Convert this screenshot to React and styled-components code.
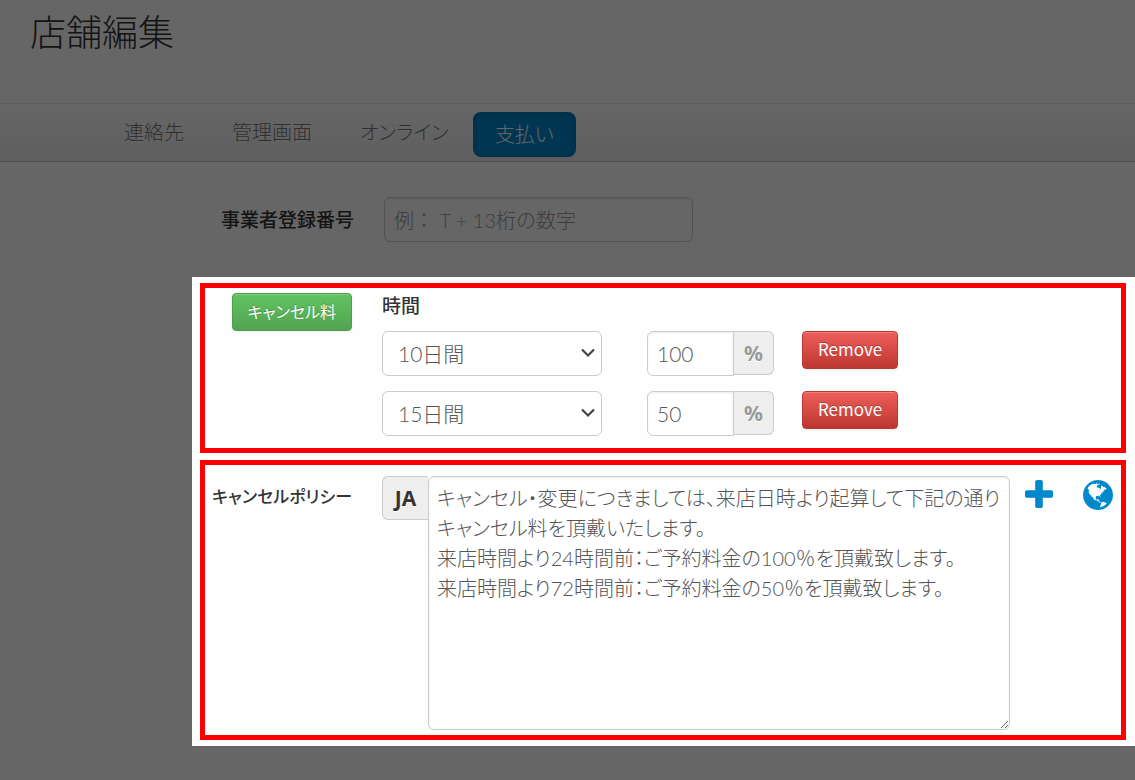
import React from 'react'
import styled, { createGlobalStyle, css } from 'styled-components'

const theme = {
  text: '#333',
  input: '#555',
  border: '#ccc',
  primary: '#0088cc',
  frame: '#ff0000',
}

const tabs = [
  { id: 'contact', name: '連絡先' },
  { id: 'admin', name: '管理画面' },
  { id: 'online', name: 'オンライン' },
  { id: 'payment', name: '支払い' },
]

const periods = ['10日間', '15日間']

const fees = [
  { id: 'fee-1', period: '10日間', percent: '100' },
  { id: 'fee-2', period: '15日間', percent: '50' },
]

const policy = `キャンセル・変更につきましては、来店日時より起算して下記の通りキャンセル料を頂戴いたします。
来店時間より24時間前：ご予約料金の100％を頂戴致します。
来店時間より72時間前：ご予約料金の50％を頂戴致します。`

const GlobalStyle = createGlobalStyle`
  * {
    box-sizing: border-box;
  }
  body {
    margin: 0;
    background: #fff;
    color: ${theme.text};
    font-family: "Noto Sans CJK JP", sans-serif;
    font-size: 21px;
    font-weight: 300;
    line-height: 30px;
    font-feature-settings: "palt";
  }
  button, input, select, textarea {
    margin: 0;
    font: inherit;
    font-feature-settings: inherit;
  }
`

const Page = styled.div`
  min-height: 100vh;
  overflow: hidden;
`
const Header = styled.header`
  height: 103px;
  padding: 0 30px;
`
const Title = styled.h1`
  margin: 0;
  font-size: 36px;
  font-weight: 300;
  line-height: 60px;
`
const Nav = styled.nav`
  display: flex;
  align-items: flex-start;
  height: 59px;
  padding: 8px 0 0 100px;
  border-top: 1px solid #e5e5e5;
  border-bottom: 1px solid #c4c4c4;
  background: linear-gradient(#fff, #ededed);
`
const Tab = styled.a`
  padding: 5px 24px 10px;
  border-radius: 8px;
  color: #777;
  font-size: 20px;
  text-decoration: none;
  text-shadow: 0 1px 0 #fff;

  ${({ $active }) => $active && css`
    padding: 7px 22px 8px;
    background: ${theme.primary};
    box-shadow: inset 0 3px 12px rgba(0, 0, 0, .15);
    color: #fff;
    text-shadow: none;
  `}
`
const Row = styled.div`
  display: flex;
  align-items: flex-start;
  gap: 30px;
`
const NumberRow = styled(Row)`
  padding: 35px 0;
`
const Side = styled.div`
  flex: none;
  width: ${({ $wide }) => ($wide ? 354 : 147)}px;
  padding-top: ${({ $top }) => $top || 0}px;
  text-align: right;
`
const Label = styled.label`
  font-size: ${({ $small }) => ($small ? 17 : 19)}px;
  font-weight: 500;
  white-space: nowrap;
`
const field = css`
  height: 45px;
  border: 1px solid ${theme.border};
  border-radius: 6px;
  background: #fff;
  box-shadow: inset 0 1px 2px rgba(0, 0, 0, .08);
  color: ${theme.input};
  font-family: Lato, "Noto Sans CJK JP", sans-serif;
  outline: none;
`
const TextInput = styled.input`
  ${field}
  width: 309px;
  padding: 0 9px;
  font-size: 20px;
  font-feature-settings: normal;

  &::placeholder {
    color: #999;
    opacity: 1;
  }
`
const PercentInput = styled.input`
  ${field}
  width: 87px;
  padding: 0 9px;
  border-radius: 6px 0 0 6px;
`
const Addon = styled.span`
  flex: none;
  height: 44px;
  padding: 6px 10px;
  border: 1px solid ${theme.border};
  background: #eee;
  color: ${({ $dark }) => ($dark ? theme.text : '#999')};
  font-family: "Noto Sans", sans-serif;
  font-weight: 700;
  text-align: center;
  text-shadow: 0 1px 0 #fff;
`
const PercentAddon = styled(Addon)`
  width: 40px;
  border-left: 0;
  border-radius: 0 6px 6px 0;
`
const LangAddon = styled(Addon)`
  width: 46px;
  border-right: 0;
  border-radius: 6px 0 0 6px;
`
const Spotlight = styled.main`
  position: relative;
  display: flex;
  flex-direction: column;
  gap: 7px;
  margin-left: 192px;
  padding: 6px 9px 6px 8px;
  background: #fff;
  box-shadow: 0 0 0 9999px rgba(0, 0, 0, .6);
`
const Frame = styled.section`
  padding: ${({ $padding }) => $padding};
  border: 5px solid ${theme.frame};
  background: #fefefe;
`
const Button = styled.button`
  height: 38px;
  padding: 0 15px 2px;
  border: 1px solid ${({ $danger }) => ($danger ? '#b93a36' : '#4b9f4b')};
  border-radius: 4px;
  background: ${({ $danger }) => ($danger
    ? 'linear-gradient(#ee5f5b, #bd362f)'
    : 'linear-gradient(#62c462, #51a351)')};
  box-shadow: inset 0 1px 0 rgba(255, 255, 255, .2), 0 1px 2px rgba(0, 0, 0, .08);
  color: #fff;
  font-size: ${({ $danger }) => ($danger ? 17 : 16)}px;
  font-weight: 400;
  line-height: 30px;
  text-shadow: 0 -1px 0 rgba(0, 0, 0, .25);
  white-space: nowrap;
`
const Fees = styled.div`
  display: flex;
  flex-direction: column;
  gap: 15px;
`
const FeesTitle = styled.div`
  height: 23px;
  font-size: 19px;
  font-weight: 500;
  line-height: 24px;
`
const FeeRow = styled.div`
  display: flex;
  align-items: flex-start;
`
const SelectBox = styled.div`
  position: relative;
  width: 220px;
  margin-right: 45px;
`
const Select = styled.select`
  ${field}
  width: 100%;
  padding: 0 30px 0 15px;
  box-shadow: none;
  appearance: none;
`
const Chevron = styled.svg`
  position: absolute;
  top: 17px;
  right: 6px;
  pointer-events: none;
`
const InputGroup = styled.div`
  display: flex;
  align-items: flex-start;
  margin-right: 28px;
`
const Editor = styled.div`
  display: flex;
  flex: 1;
  align-items: flex-start;
`
const TextArea = styled.textarea`
  ${field}
  flex: 1;
  min-width: 0;
  height: 254px;
  padding: 6px 0 6px 8px;
  font-size: 20px;
  line-break: anywhere;
  resize: both;
`
const IconLink = styled.a`
  display: flex;
  margin: ${({ $margin }) => $margin};
  color: ${theme.primary};
`

const PlusIcon = () => (
  <svg width="28" height="28" viewBox="192 128 1408 1408" fill="currentColor" aria-hidden="true">
    <path d="M1600 736v192q0 40-28 68t-68 28h-416v416q0 40-28 68t-68 28h-192q-40 0-68-28t-28-68v-416h-416q-40 0-68-28t-28-68v-192q0-40 28-68t68-28h416v-416q0-40 28-68t68-28h192q40 0 68 28t28 68v416h416q40 0 68 28t28 68z" />
  </svg>
)

const GlobeIcon = () => (
  <svg width="30" height="30" viewBox="0 128 1536 1536" fill="currentColor" aria-hidden="true">
    <path d="M768 128q209 0 385.500 103t279.500 279.500 103 385.500-103 385.500-279.500 279.500-385.500 103-385.500-103-279.500-279.500-103-385.500 103-385.500 279.500-279.500 385.500-103zm274 521q-2 1-9.500 9.500t-13.500 9.500q2 0 4.500-5t5-11 3.500-7q6-7 22-15 14-6 52-12 34-8 51 11-2-2 9.500-13t14.500-12q3-2 15-4.500t15-7.500l2-22q-12 1-17.500-7t-6.500-21q0 2-6 8 0-7-4.500-8t-11.500 1-9 1q-10-3-15-7.500t-8-16.500-4-15q-2-5-9.500-10.500t-9.500-10.500q-1-2-2.500-5.500t-3-6.500-4-5.500-5.500-2.500-7 5-7.500 10-4.500 5q-3-2-6-1.500t-4.500 1-4.500 3-5 3.500q-3 2-8.500 3t-8.500 2q15-5-1-11-10-4-16-3 9-4 7.500-12t-8.500-14h5q-1-4-8.500-8.500t-17.500-8.500-13-6q-8-5-34-9.500t-33-.5q-5 6-4.500 10.500t4 14 3.500 12.500q1 6-5.500 13t-6.500 12q0 7 14 15.500t10 21.500q-3 8-16 16t-16 12q-5 8-1.500 18.500t10.500 16.500q2 2 1.500 4t-3.500 4.500-5.500 4-6.500 3.500l-3 2q-11 5-20.500-6t-13.500-26q-7-25-16-30-23-8-29 1-5-13-41-26-25-9-58-4 6-1 0-15-7-15-19-12 3-6 4-17.500t1-13.500q3-13 12-23 1-1 7-8.500t9.500-13.500.5-6q35 4 50-11 5-5 11.500-17t10.500-17q9-6 14-5.500t14.500 5.500 14.500 5q14 1 15.500-11t-7.500-20q12 1 3-17-4-7-8-9-12-4-27 5-8 4 2 8-1-1-9.500 10.500t-16.500 17.500-16-5q-1-1-5.500-13.500t-9.500-13.500q-8 0-16 15 3-8-11-15t-24-8q19-12-8-27-7-4-20.500-5t-19.500 4q-5 7-5.500 11.500t5 8 10.500 5.500 11.500 4 8.500 3q14 10 8 14-2 1-8.500 3.500t-11.500 4.500-6 4q-3 4 0 14t-2 14q-5-5-9-17.500t-7-16.500q7 9-25 6l-10-1q-4 0-16 2t-20.500 1-13.500-8q-4-8 0-20 1-4 4-2-4-3-11-9.500t-10-8.500q-46 15-94 41 6 1 12-1 5-2 13-6.500t10-5.500q34-14 42-7l5-5q14 16 20 25-7-4-30-1-20 6-22 12 7 12 5 18-4-3-11.500-10t-14.500-11-15-5q-16 0-22 1-146 80-235 222 7 7 12 8 4 1 5 9t2.500 11 11.500-3q9 8 3 19 1-1 44 27 19 17 21 21 3 11-10 18-1-2-9-9t-9-4q-3 5 .5 18.500t10.500 12.500q-7 0-9.500 16t-2.500 35.500-1 23.500l2 1q-3 12 5.500 34.500t21.500 19.500q-13 3 20 43 6 8 8 9 3 2 12 7.500t15 10 10 10.500q4 5 10 22.500t14 23.500q-2 6 9.500 20t10.500 23q-1 0-2.500 1t-2.500 1q3 7 15.500 14t15.500 13q1 3 2 10t3 11 8 2q2-20-24-62-15-25-17-29-3-5-5.500-15.500t-4.500-14.500q2 0 6 1.500t8.500 3.500 7.500 4 2 3q-3 7 2 17.500t12 18.500 17 19 12 13q6 6 14 19.500t0 13.500q9 0 20 10.500t17 19.500q5 8 8 26t5 24q2 7 8.500 13.500t12.500 9.500l16 8 13 7q5 2 18.500 10.500t21.500 11.500q10 4 16 4t14.500-2.500 13.500-3.500q15-2 29 15t21 21q36 19 55 11-2 1 .5 7.500t8 15.500 9 14.500 5.500 8.500q5 6 18 15t18 15q6-4 7-9-3 8 7 20t18 10q14-3 14-32-31 15-49-18 0-1-2.500-5.500t-4-8.500-2.500-8.500 0-7.500 5-3q9 0 10-3.500t-2-12.500-4-13q-1-8-11-20t-12-15q-5 9-16 8t-16-9q0 1-1.500 5.500t-1.500 6.500q-13 0-15-1 1-3 2.500-17.500t3.500-22.500q1-4 5.500-12t7.500-14.500 4-12.500-4.500-9.500-17.500-2.500q-19 1-26 20-1 3-3 10.500t-5 11.500-9 7q-7 3-24 2t-24-5q-13-8-22.500-29t-9.500-37q0-10 2.500-26.500t3-25-5.500-24.500q3-2 9-9.500t10-10.500q2-1 4.500-1.500t4.500 0 4-1.500 3-6q-1-1-4-3-3-3-4-3 7 3 28.500-1.500t27.500 1.500q15 11 22-2 0-1-2.500-9.500t-.5-13.500q5 27 29 9 3 3 15.500 5t17.500 5q3 2 7 5.500t5.500 4.500 5-.5 8.500-6.500q10 14 12 24 11 40 19 44 7 3 11 2t4.500-9.500 0-14-1.500-12.500l-1-8v-18l-1-8q-15-3-18.500-12t1.500-18.500 15-18.500q1-1 8-3.500t15.500-6.500 12.500-8q21-19 15-35 7 0 11-9-1 0-5-3t-7.500-5-4.500-2q9-5 2-16 5-3 7.500-11t7.500-10q9 12 21 2 7-8 1-16 5-7 20.500-10.500t18.500-9.500q7 2 8-2t1-12 3-12q4-5 15-9t13-5l17-11q3-4 0-4 18 2 31-11 10-11-6-20 3-6-3-9.500t-15-5.500q3-1 11.500-.5t10.500-1.500q15-10-7-16-17-5-43 12zm-163 877q206-36 351-189-3-3-12.500-4.500t-12.500-3.500q-18-7-24-8 1-7-2.500-13t-8-9-12.500-8-11-7q-2-2-7-6t-7-5.500-7.500-4.500-8.500-2-10 1l-3 1q-3 1-5.500 2.500t-5.500 3-4 3 0 2.500q-21-17-36-22-5-1-11-5.500t-10.500-7-10-1.500-11.500 7q-5 5-6 15t-2 13q-7-5 0-17.500t2-18.500q-3-6-10.500-4.500t-12 4.500-11.500 8.500-9 6.500-8.500 5.500-8.500 7.500q-3 4-6 12t-5 11q-2-4-11.500-6.500t-9.500-5.500q2 10 4 35t5 38q7 31-12 48-27 25-29 40-4 22 12 26 0 7-8 20.500t-7 21.500q0 6 2 16z" />
  </svg>
)

const Fee = ({ fee: { period, percent } }) => (
  <FeeRow>
    <SelectBox>
      <Select aria-label="時間" defaultValue={period}>
        {periods.map(name => (
          <option key={name}>{name}</option>
        ))}
      </Select>
      <Chevron width="16" height="10" viewBox="0 0 16 10" aria-hidden="true">
        <path d="M2 1.500L8 7.500l6-6" fill="none" stroke="#444" strokeWidth="2.200" />
      </Chevron>
    </SelectBox>
    <InputGroup>
      <PercentInput type="text" aria-label="%" defaultValue={percent} />
      <PercentAddon>%</PercentAddon>
    </InputGroup>
    <Button type="button" $danger>Remove</Button>
  </FeeRow>
)

export default () => {
  return (
    <Page>
      <GlobalStyle />
      <Header>
        <Title>店舗編集</Title>
      </Header>
      <Nav>
        {tabs.map(tab => (
          <Tab key={tab.id} href={`#${tab.id}`} $active={tab.id === 'payment'}>{tab.name}</Tab>
        ))}
      </Nav>
      <NumberRow>
        <Side $wide $top={6}>
          <Label htmlFor="number">事業者登録番号</Label>
        </Side>
        <TextInput id="number" type="text" placeholder="例： T + 13桁の数字" />
      </NumberRow>
      <Spotlight>
        <Frame $padding="5px 8px 12px 0">
          <Row>
            <Side>
              <Button type="button">キャンセル料</Button>
            </Side>
            <Fees>
              <FeesTitle>時間</FeesTitle>
              {fees.map(fee => (
                <Fee key={fee.id} fee={fee} />
              ))}
            </Fees>
          </Row>
        </Frame>
        <Frame $padding="11px 8px 5px 0">
          <Row>
            <Side $top={3}>
              <Label htmlFor="policy" $small>キャンセルポリシー</Label>
            </Side>
            <Editor>
              <LangAddon $dark>JA</LangAddon>
              <TextArea id="policy" defaultValue={policy} />
              <IconLink href="#add" aria-label="追加" $margin="4px 0 0 15px">
                <PlusIcon />
              </IconLink>
              <IconLink href="#translate" aria-label="翻訳" $margin="4px 0 0 30px">
                <GlobeIcon />
              </IconLink>
            </Editor>
          </Row>
        </Frame>
      </Spotlight>
    </Page>
  )
}
